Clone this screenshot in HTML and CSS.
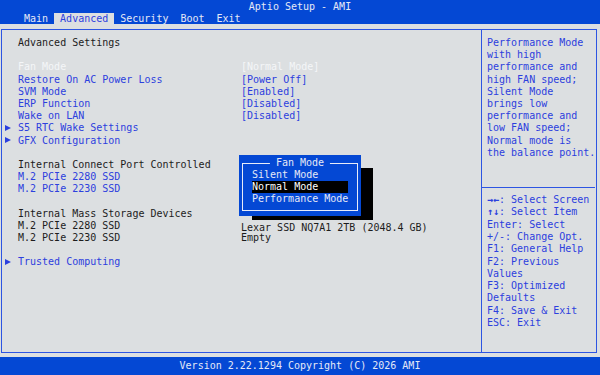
FILE: index.html
```html
<!DOCTYPE html>
<html lang="en">
<head>
    <meta charset="UTF-8">
    <meta name="viewport" content="width=device-width, initial-scale=1.0">
    <title>Aptio Setup - AMI</title>
    <link rel="stylesheet" href="styles.css">
</head>
<body>

<div class="topbar">
    <div class="title">Aptio Setup - AMI</div>
    <div class="tabs">
        <span class="tab">Main</span>
        <span class="tab active">Advanced</span>
        <span class="tab">Security</span>
        <span class="tab">Boot</span>
        <span class="tab">Exit</span>
    </div>
</div>

<div class="frame">
    <div class="left">
        <div class="row"><span></span><span class="plain">Advanced Settings</span></div>

        <div class="group">
            <div class="row current"><span></span><span>Fan Mode</span><span>[Normal Mode]</span></div>
            <div class="row"><span></span><span>Restore On AC Power Loss</span><span>[Power Off]</span></div>
            <div class="row"><span></span><span>SVM Mode</span><span>[Enabled]</span></div>
            <div class="row"><span></span><span>ERP Function</span><span>[Disabled]</span></div>
            <div class="row"><span></span><span>Wake on LAN</span><span>[Disabled]</span></div>
            <div class="row"><span class="arrow"></span><span>S5 RTC Wake Settings</span></div>
            <div class="row"><span class="arrow"></span><span>GFX Configuration</span></div>
        </div>

        <div class="group">
            <div class="row"><span></span><span class="plain">Internal Connect Port Controlled</span></div>
            <div class="row"><span></span><span>M.2 PCIe 2280 SSD</span></div>
            <div class="row"><span></span><span>M.2 PCIe 2230 SSD</span></div>
        </div>

        <div class="group">
            <div class="row"><span></span><span class="plain">Internal Mass Storage Devices</span></div>
            <div class="row low"><span></span><span class="plain">M.2 PCIe 2280 SSD</span><span class="plain">Lexar SSD NQ7A1 2TB (2048.4 GB)</span></div>
            <div class="row"><span></span><span class="plain">M.2 PCIe 2230 SSD</span><span class="plain">Empty</span></div>
        </div>

        <div class="group">
            <div class="row"><span class="arrow"></span><span>Trusted Computing</span></div>
        </div>

        <!-- option popup over the settings list -->
        <div class="popup-wrap">
            <div class="popup-shadow"></div>
            <div class="popup">
                <div class="popup-inner">
                    <span class="popup-title">Fan Mode</span>
                    <div class="options">
                        <div>Silent Mode</div>
                        <div class="picked">Normal Mode</div>
                        <div>Performance Mode</div>
                    </div>
                </div>
            </div>
        </div>
    </div>

    <div class="right">
        <div class="help">
            Performance Mode<br>
            with high<br>
            performance and<br>
            high FAN speed;<br>
            Silent Mode<br>
            brings low<br>
            performance and<br>
            low FAN speed;<br>
            Normal mode is<br>
            the balance point.
        </div>
        <div class="rule"></div>
        <div class="keys">
            <div><b>→←</b>: Select Screen</div>
            <div><b>↑↓</b>: Select Item</div>
            <div>Enter: Select</div>
            <div>+/-: Change Opt.</div>
            <div>F1: General Help</div>
            <div>F2: Previous</div>
            <div>Values</div>
            <div>F3: Optimized</div>
            <div>Defaults</div>
            <div>F4: Save &amp; Exit</div>
            <div>ESC: Exit</div>
        </div>
    </div>
</div>

<div class="footer">Version 2.22.1294 Copyright (C) 2026 AMI</div>

</body>
</html>
```

FILE: styles.css
```css
body {
    margin: 0;
    width: 600px;
    height: 375px;
    overflow: hidden;
    background-color: #dcdfe1;
    font-family: "DejaVu Sans Mono", "Liberation Mono", monospace;
    font-size: 10px;
    color: #1c1c1c;
}
.topbar {
    height: 24px;
    padding-top: 1px;
    box-sizing: border-box;
    background-color: #0448d4;
    color: #e4e8f6;
}
.title {
    line-height: 12px;
    text-align: center;
}
.tabs {
    display: flex;
    padding-left: 18px;
    line-height: 11px;
}
.tab {
    padding: 0 6px;
}
.tab.active {
    background-color: #dcdfe1;
    color: #2c40de;
}
.frame {
    display: flex;
    width: 596px;
    height: 324px;
    margin: 5px 0 4px 1px;
    border: 1px solid #2d55e2;
    box-sizing: border-box;
}
.left {
    position: relative;
    width: 480px;
    padding-top: 7px;
    border-right: 1px solid #2d55e2;
    box-sizing: border-box;
}
.group {
    margin-top: 12.2px;
}
.row {
    display: grid;
    grid-template-columns: 16px 223px auto;
    line-height: 12.2px;
    height: 12.2px;
    color: #2c40de;
    white-space: pre;
}
.row.low span:last-child {
    padding-top: 2px;
}
.row .plain {
    color: #1c1c1c;
}
.row.current {
    color: #f4f6f8;
}
.arrow {
    width: 0;
    height: 0;
    margin: 2.5px 0 0 3px;
    border-left: 6px solid #2c40de;
    border-top: 3.5px solid transparent;
    border-bottom: 3.5px solid transparent;
}
.right {
    flex: 1;
    display: flex;
    flex-direction: column;
    color: #2c40de;
    line-height: 12.2px;
    white-space: nowrap;
}
.help {
    padding: 7px 0 0 5px;
}
.rule {
    height: 1px;
    margin: 28px 1px 0 0;
    background-color: #2d55e2;
}
.keys {
    padding: 6px 0 0 5px;
    line-height: 12.3px;
}
/* Fan Mode selection popup */
.popup-wrap {
    position: absolute;
    left: 237px;
    top: 125px;
    width: 136px;
    height: 68px;
}
.popup-shadow {
    position: absolute;
    left: 13px;
    top: 13px;
    width: 121px;
    height: 52px;
    background-color: #000;
}
.popup {
    position: absolute;
    left: 0;
    top: 0;
    width: 122px;
    height: 61px;
    background-color: #0448d4;
    color: #e4e8f6;
}
.popup-inner {
    position: absolute;
    left: 3px;
    right: 3px;
    top: 8px;
    bottom: 5px;
    border: 1px solid #e8ecf8;
}
.popup-title {
    position: absolute;
    top: -7px;
    left: 50%;
    transform: translateX(-50%);
    padding: 0 6px;
    line-height: 12px;
    background-color: #0448d4;
    white-space: nowrap;
}
.options {
    width: max-content;
    padding: 5px 0 0 9px;
    line-height: 12px;
}
.options .picked {
    background-color: #000;
    color: #fff;
}
.footer {
    height: 18px;
    line-height: 18px;
    text-align: center;
    background-color: #0448d4;
    color: #e4e8f6;
}
```
